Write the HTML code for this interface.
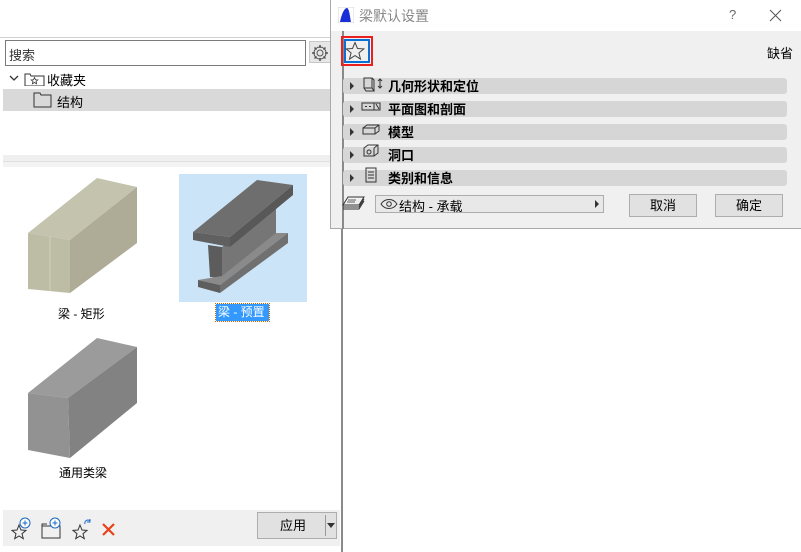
<!DOCTYPE html>
<html><head><meta charset="utf-8"><style>
*{margin:0;padding:0;box-sizing:border-box}
body{width:801px;height:552px;background:#fff;position:relative;overflow:hidden;font-family:"Liberation Sans","Noto Sans CJK SC",sans-serif;font-size:12px;color:#000}
.a{position:absolute}
.sec{position:absolute;left:343px;width:444px;height:16px;background:#d6d6d6;border-radius:3px}
.tri{position:absolute;width:0;height:0;border-left:4px solid #333;border-top:4px solid transparent;border-bottom:4px solid transparent}
.btn{position:absolute;background:#e1e1e1;border:1px solid #adadad;text-align:center;font-size:13px}
</style></head><body>
<div class="a" style="left:0;top:37px;width:343px;height:515px;background:#fff;border-top:1px solid #d0d0d0;border-right:2px solid #8a8a8a"></div>
<div class="a" style="left:5px;top:40px;width:301px;height:26px;border:1px solid #7a7a7a;background:#fff"></div>
<div class="a" style="left:9px;top:45px;font-size:13px;color:#333">搜索</div>
<div class="a" style="left:309px;top:41px;width:26px;height:22px;background:#e6e6e6;border:1px solid #c8c8c8"></div>
<svg class="a" style="left:309px;top:42px" width="30" height="22"><circle cx="11" cy="11" r="3" fill="none" stroke="#555"/><path d="M11 3v3M11 16v3M3 11h3M16 11h3M5.5 5.5l2 2M14.5 14.5l2 2M5.5 16.5l2-2M14.5 7.5l2-2" stroke="#555" stroke-width="1.5"/><circle cx="11" cy="11" r="6" fill="none" stroke="#555"/><path d="M23 8l3 3-3 3z" fill="#333"/></svg>
<svg class="a" style="left:8px;top:72px" width="40" height="14"><path d="M2 4l4 4 4-4" stroke="#333" fill="none" stroke-width="1.3"/><path d="M17 2h5l1 2h13v10H17z" fill="none" stroke="#333"/><path d="M26.5 5.5l1 2.3 2.3.2-1.8 1.5.6 2.3-2.1-1.3-2.1 1.3.6-2.3-1.8-1.5 2.3-.2z" fill="none" stroke="#333" stroke-width=".8"/></svg>
<div class="a" style="left:47px;top:70px;font-size:13px">收藏夹</div>
<div class="a" style="left:3px;top:89px;width:337px;height:22px;background:#d9d9d9"></div>
<svg class="a" style="left:33px;top:92px" width="20" height="16"><path d="M1 1h6l1 2h10v12H1z" fill="none" stroke="#333"/></svg>
<div class="a" style="left:57px;top:92px;font-size:13px">结构</div>
<div class="a" style="left:3px;top:155px;width:337px;height:6px;background:#efefef"></div>
<div class="a" style="left:3px;top:161px;width:337px;height:1px;background:#e0e0e0"></div>
<div class="a" style="left:3px;top:162px;width:337px;height:5px;background:#f3f3f3"></div>
<svg class="a" style="left:0;top:165px" width="340" height="330">
<polygon points="28,68 97,13 137,22 70,75" fill="#c4c3ad"/>
<polygon points="70,75 137,22 137,78 70,128" fill="#aeac96"/>
<polygon points="28,68 70,75 70,128 28,124" fill="#bdbca5"/>
<line x1="50" y1="71" x2="50" y2="126" stroke="#d2d1bd"/>
<rect x="179" y="9" width="128" height="128" fill="#cce4f7"/>
<polygon points="222,82 276,42 276,72 222,113" fill="#767676"/>
<polygon points="208,80 222,82 222,113 210,112" fill="#5c5c5c"/>
<polygon points="198,115 222,111 276,68 288,68 220,120" fill="#8a8a8a"/>
<polygon points="220,120 288,68 288,78 220,128" fill="#707070"/>
<polygon points="198,115 220,120 220,128 198,122" fill="#5e5e5e"/>
<polygon points="193,67 257,15 293,20 230,72" fill="#6e6e6e"/>
<polygon points="230,72 293,20 293,30 230,82" fill="#585858"/>
<polygon points="193,67 230,72 230,82 193,75" fill="#606060"/>
<polygon points="28,228 97,173 137,182 68,233" fill="#9b9b9b"/>
<polygon points="68,233 137,182 137,238 70,293" fill="#828282"/>
<polygon points="28,228 68,233 70,293 28,285" fill="#929292"/>
</svg>
<div class="a" style="left:58px;top:305px">梁 - 矩形</div>
<div class="a" style="left:216px;top:304px;width:53px;height:17px;background:#3399ff;outline:1px dotted #c60;color:#fff;padding-left:2px;line-height:17px">梁 - 预置</div>
<div class="a" style="left:59px;top:464px">通用类梁</div>
<div class="a" style="left:3px;top:510px;width:337px;height:36px;background:#f0f0f0"></div>
<svg class="a" style="left:10px;top:516px" width="110" height="24">
<path d="M9 9l2 5 5 .4-4 3.3 1.3 5-4.3-2.7-4.3 2.7 1.3-5-4-3.3 5-.4z" fill="none" stroke="#333"/>
<circle cx="15" cy="7" r="5" fill="#fff" stroke="#1b6ac9"/><path d="M15 4.5v5M12.5 7h5" stroke="#1b6ac9"/>
<path d="M32 10h18v12H32z M32 10v-2h5" fill="none" stroke="#333"/><circle cx="45" cy="7" r="5" fill="#fff" stroke="#1b6ac9"/><path d="M45 4.5v5M42.5 7h5" stroke="#1b6ac9"/>
<path d="M70 9l2 5 5 .4-4 3.3 1.3 5-4.3-2.7-4.3 2.7 1.3-5-4-3.3 5-.4z" fill="none" stroke="#333"/><path d="M75 8a3 3 0 0 1 5-3M80 3v3h-3" fill="none" stroke="#1b6ac9"/>
<path d="M93 8l11 11M104 8L93 19" stroke="#e8421c" stroke-width="2.2"/></svg>
<div class="btn" style="left:257px;top:512px;width:80px;height:27px;line-height:25px;text-align:left;padding-left:22px">应用</div>
<div class="a" style="left:325px;top:515px;width:1px;height:21px;background:#999"></div>
<div class="a" style="left:327px;top:523px;border-top:5px solid #333;border-left:4px solid transparent;border-right:4px solid transparent"></div>
<div class="a" style="left:330px;top:0;width:471px;height:229px;background:#f0f0f0;border:1px solid #aaa;border-right:none"></div>
<div class="a" style="left:331px;top:0;width:470px;height:31px;background:#fff"></div>
<svg class="a" style="left:338px;top:7px" width="16" height="16"><rect width="16" height="16" fill="#fff" stroke="#aaa" stroke-width=".5"/><path d="M2 15C4 5 7 1 9 1c2 0 3 8 4 14z" fill="#1b2fd6"/></svg>
<div class="a" style="left:359px;top:6px;font-size:14px;color:#888">梁默认设置</div>
<div class="a" style="left:729px;top:7px;font-size:13px;color:#666">?</div>
<svg class="a" style="left:769px;top:9px" width="13" height="13"><path d="M1 1l11 11M12 1L1 12" stroke="#555"/></svg>
<div class="a" style="left:342px;top:31px;width:2px;height:198px;background:#8a8a8a"></div>
<div class="a" style="left:341px;top:36px;width:32px;height:30px;border:2px solid #e82020"></div>
<div class="a" style="left:344px;top:39px;width:26px;height:24px;border:2px solid #0a6fd6"></div>
<svg class="a" style="left:345px;top:41px" width="20" height="20"><path d="M10 1.5l2.5 6 6.3.4-4.9 4 1.6 6.2L10 14.6l-5.5 3.5 1.6-6.2-4.9-4 6.3-.4z" fill="none" stroke="#444"/></svg>
<div class="a" style="left:767px;top:43px;font-size:13px">缺省</div>
<div class="sec" style="top:78px"></div><div class="sec" style="top:101px"></div><div class="sec" style="top:124px"></div><div class="sec" style="top:147px"></div><div class="sec" style="top:170px"></div>
<div class="tri" style="left:350px;top:82px"></div><div class="tri" style="left:350px;top:105px"></div><div class="tri" style="left:350px;top:128px"></div><div class="tri" style="left:350px;top:151px"></div><div class="tri" style="left:350px;top:174px"></div>
<svg class="a" style="left:361px;top:76px" width="24" height="112" fill="none" stroke="#333">
<path d="M3 2h8v10H3z M3 12l2 3h8l-2-3 M11 2l2 2v11"/><path d="M19 3v9M17 5l2-2 2 2M17 10l2 2 2-2"/>
<path d="M1 27h12v7H1z M13 27h6v7h-6 M15 28l3 5M4 30.5h2M8 30.5h2"/>
<path d="M2 52l4-3h12v6l-4 3H2z M2 52h12v6 M14 52l4-3"/>
<path d="M3 72l4-3h10v8l-4 3H3z M13 72v8 M13 72l4-3"/><circle cx="8" cy="76" r="2"/>
<path d="M5 92h10v14H5z M7 96h6M7 99h6M7 102h6"/></svg>
<div class="a" style="left:388px;top:78px;font-weight:bold;font-size:13px;line-height:17px">几何形状和定位</div>
<div class="a" style="left:388px;top:101px;font-weight:bold;font-size:13px;line-height:17px">平面图和剖面</div>
<div class="a" style="left:388px;top:124px;font-weight:bold;font-size:13px;line-height:17px">模型</div>
<div class="a" style="left:388px;top:147px;font-weight:bold;font-size:13px;line-height:17px">洞口</div>
<div class="a" style="left:388px;top:170px;font-weight:bold;font-size:13px;line-height:17px">类别和信息</div>
<svg class="a" style="left:342px;top:195px" width="24" height="18" fill="none" stroke="#333"><path d="M6 2h16l-5 8H1z M1 12h16l5-8 M1 14h16l5-8"/><path d="M6 5h8M5 7h8" stroke-width=".7"/></svg>
<div class="a" style="left:375px;top:195px;width:229px;height:18px;border:1px solid #adadad;background:#e8e8e8"></div>
<svg class="a" style="left:380px;top:198px" width="18" height="12"><path d="M1 6c4-6 12-6 16 0c-4 6-12 6-16 0z" fill="none" stroke="#333"/><circle cx="9" cy="6" r="2.3" fill="none" stroke="#333"/></svg>
<div class="a" style="left:399px;top:196px;font-size:13px">结构 - 承载</div>
<div class="a" style="left:595px;top:200px;border-left:4px solid #333;border-top:4px solid transparent;border-bottom:4px solid transparent"></div>
<div class="btn" style="left:629px;top:194px;width:68px;height:23px;line-height:21px">取消</div>
<div class="btn" style="left:715px;top:194px;width:68px;height:23px;line-height:21px">确定</div>
</body></html>
